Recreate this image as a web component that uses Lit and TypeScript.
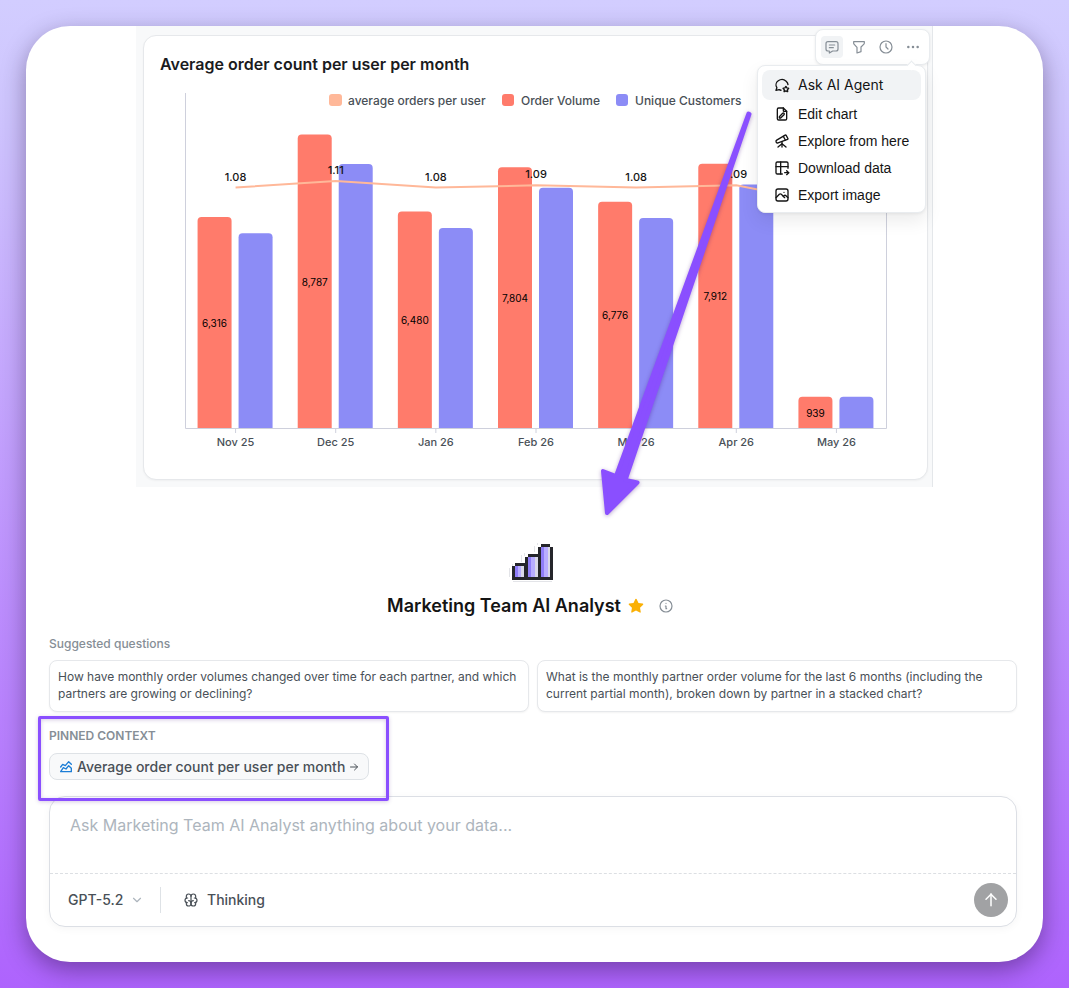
import { LitElement, html, svg, css } from "lit";
import { customElement, state } from "lit/decorators.js";

const ICONS: Record<string, string[]> = {
  message: ["M8 9h8", "M8 13h6", "M18 4a3 3 0 0 1 3 3v8a3 3 0 0 1 -3 3h-5l-5 3v-3h-2a3 3 0 0 1 -3 -3v-8a3 3 0 0 1 3 -3h12z"],
  filter: ["M4 4h16v2.172a2 2 0 0 1 -.586 1.414l-4.414 4.414v7l-6 2v-8.5l-4.48 -4.928a2 2 0 0 1 -.52 -1.345v-2.227z"],
  clock: ["M3 12a9 9 0 1 0 18 0a9 9 0 1 0 -18 0", "M12 7v5l3 3"],
  dots: ["M4 12a1 1 0 1 0 2 0a1 1 0 1 0 -2 0", "M11 12a1 1 0 1 0 2 0a1 1 0 1 0 -2 0", "M18 12a1 1 0 1 0 2 0a1 1 0 1 0 -2 0"],
  agent: [
    "M10.517 19.869a9.757 9.757 0 0 1 -2.817 -.869l-4.7 1l1.3 -3.9c-2.324 -3.437 -1.426 -7.872 2.1 -10.374c3.526 -2.501 8.59 -2.296 11.845 .48c1.666 1.421 2.594 3.29 2.747 5.21",
    "M17.8 20.817l-2.172 1.138a.392 .392 0 0 1 -.568 -.41l.415 -2.411l-1.757 -1.707a.389 .389 0 0 1 .217 -.665l2.428 -.352l1.086 -2.193a.392 .392 0 0 1 .702 0l1.086 2.193l2.428 .352a.39 .39 0 0 1 .217 .665l-1.757 1.707l.414 2.41a.39 .39 0 0 1 -.567 .411l-2.172 -1.138z",
  ],
  edit: ["M14 3v4a1 1 0 0 0 1 1h4", "M17 21h-10a2 2 0 0 1 -2 -2v-14a2 2 0 0 1 2 -2h7l5 5v11a2 2 0 0 1 -2 2z", "M10 18l5 -5a1.414 1.414 0 0 0 -2 -2l-5 5v2h2z"],
  telescope: [
    "M6 21l6 -5l6 5", "M12 13v8",
    "M3.294 13.678l.166 .281c.52 .88 1.624 1.265 2.605 .91l14.242 -5.165a1.023 1.023 0 0 0 .565 -1.456l-2.62 -4.705a1.087 1.087 0 0 0 -1.447 -.42l-.056 .032l-12.694 7.618c-1.02 .613 -1.357 1.897 -.76 2.905z",
    "M14 5l3 5.5",
  ],
  download: ["M12.5 21h-7.5a2 2 0 0 1 -2 -2v-14a2 2 0 0 1 2 -2h14a2 2 0 0 1 2 2v7.5", "M3 10h18", "M10 3v18", "M16 19h6", "M19 16l3 3l-3 3"],
  photo: ["M15 8h.01", "M3 6a3 3 0 0 1 3 -3h12a3 3 0 0 1 3 3v12a3 3 0 0 1 -3 3h-12a3 3 0 0 1 -3 -3v-12z", "M3 16l5 -5c.928 -.893 2.072 -.893 3 0l5 5", "M14 14l1 -1c.928 -.893 2.072 -.893 3 0l3 3"],
  area: ["M4 19l4 -6l4 2l4 -5l4 4l0 5l-16 0", "M4 12l3 -4l4 2l5 -6l4 4"],
  right: ["M5 12h14", "M13 6l6 6l-6 6"],
  up: ["M12 5v14", "M18 11l-6 -6", "M6 11l6 -6"],
  down: ["M6 9l6 6l6 -6"],
  info: ["M3 12a9 9 0 1 0 18 0a9 9 0 0 0 -18 0", "M12 8h.01", "M11 12h1v4h1"],
  brain: [
    "M15.5 13a3.5 3.5 0 0 0 -3.5 3.5v1a3.5 3.5 0 0 0 7 0v-1.8",
    "M8.5 13a3.5 3.5 0 0 1 3.5 3.5v1a3.5 3.5 0 0 1 -7 0v-1.8",
    "M17.5 16a3.5 3.5 0 0 0 0 -7h-.5", "M19 9.3v-2.8a3.5 3.5 0 0 0 -7 0",
    "M6.5 16a3.5 3.5 0 0 1 0 -7h.5", "M5 9.3v-2.8a3.5 3.5 0 0 1 7 0v10",
  ],
};

const icon = (name: string, size: number, stroke = 2) => html`
  <svg width=${size} height=${size} viewBox="0 0 24 24" fill="none" stroke="currentColor"
    stroke-width=${stroke} stroke-linecap="round" stroke-linejoin="round" aria-hidden="true">
    ${ICONS[name].map((d) => svg`<path d=${d}></path>`)}
  </svg>`;

interface Month { label: string; orders: number; customers: number; average: number; partial?: boolean; }

const MONTHS: Month[] = [
  { label: "Nov 25", orders: 6316, customers: 5832, average: 1.08 },
  { label: "Dec 25", orders: 8787, customers: 7905, average: 1.11 },
  { label: "Jan 26", orders: 6480, customers: 5990, average: 1.08 },
  { label: "Feb 26", orders: 7804, customers: 7190, average: 1.09 },
  { label: "Mar 26", orders: 6776, customers: 6290, average: 1.08 },
  { label: "Apr 26", orders: 7912, customers: 7290, average: 1.09 },
  { label: "May 26", orders: 939, customers: 935, average: 1.0, partial: true },
];

@customElement("order-chart")
export class OrderChart extends LitElement {
  static styles = css`
    :host { display: block; }
    svg { display: block; width: 100%; height: auto; font-family: Inter, "Liberation Sans", sans-serif; }
    .axis { stroke: #ced0dc; stroke-width: 1; fill: none; }
    .orders { fill: #ff7b6b; }
    .customers { fill: #8c8cf6; }
    .average { fill: #ffb899; }
    .line { fill: none; stroke: #ffb899; stroke-width: 2; stroke-linecap: butt; }
    text { text-anchor: middle; }
    .legend { font-size: 12px; font-weight: 500; fill: #495057; text-anchor: start; }
    .tick { font-size: 11px; font-weight: 500; fill: #495057; }
    .avg { font-size: 11px; font-weight: 500; fill: #141414; }
    .value { font-size: 10px; fill: #000; }
  `;

  private bar(x: number, value: number, cls: string) {
    const y = 342 - value * 0.0334;
    return svg`<path class=${cls} d="M${x} 342V${y + 4}q0 -4 4 -4h26q4 0 4 4V342z"></path>`;
  }

  render() {
    const step = 701 / 7;
    const centre = (i: number) => 25.5 + step * (i + 0.5);
    const y = (v: number) => 101.5 - (v - 1.08) * 217;
    const pts = MONTHS.map((m, i) => [centre(i), y(m.average)]);
    const path = pts.map(([px, py], i) => (i ? `L${px} ${py}` : `M${px} ${py}`)).join("");
    return html`
      <svg viewBox="0 0 751 366" role="img" aria-label="Average order count per user per month">
        <path class="axis" d="M25.5 7V342.5H726.5V7"></path>
        <rect class="average" x="169" y="8" width="13" height="12" rx="3"></rect>
        <text class="legend" x="188" y="19">average orders per user</text>
        <rect class="orders" x="342" y="8" width="12" height="12" rx="3"></rect>
        <text class="legend" x="361" y="19">Order Volume</text>
        <rect class="customers" x="456" y="8" width="12" height="12" rx="3"></rect>
        <text class="legend" x="475" y="19">Unique Customers</text>
        ${MONTHS.map((m, i) => {
          const c = centre(i);
          return svg`
            ${this.bar(c - 38, m.orders, "orders")}
            ${this.bar(c + 3, m.customers, "customers")}
            <path class="axis" d="M${c} 343V347"></path>
            <text class="tick" x=${c} y="360">${m.label}</text>`;
        })}
        <path class="line" d=${path}></path>
        ${MONTHS.map((m, i) => svg`
          <text class="value" x=${centre(i) - 21} y=${346.5 - m.orders * 0.0167}>${m.orders.toLocaleString("en-US")}</text>
          ${m.partial ? null : svg`<text class="avg" x=${centre(i)} y=${y(m.average) - 7}>${m.average.toFixed(2)}</text>`}`)}
      </svg>`;
  }
}

@customElement("chart-menu")
export class ChartMenu extends LitElement {
  static styles = css`
    :host { display: block; }
    .toolbar {
      display: flex; gap: 5px; width: max-content; box-sizing: border-box; margin-left: auto;
      padding: 6px 5px; border: 1px solid #e9ecef; border-radius: 8px; background: #fff;
      box-shadow: 0 1px 3px rgba(0, 0, 0, 0.08);
    }
    button { font: inherit; border: 0; background: none; padding: 0; margin: 0; cursor: pointer; }
    .tool {
      display: flex; align-items: center; justify-content: center;
      width: 22px; height: 22px; border-radius: 4px; color: #868e96;
    }
    .tool.on, .item.on { background: #f1f3f5; }
    .menu {
      position: relative; width: 169px; box-sizing: border-box; margin: 0 4px 0 auto; padding: 4px;
      border: 1px solid #e9ecef; border-radius: 8px; background: #fff;
      box-shadow: 0 1px 3px rgba(0, 0, 0, 0.06), 0 8px 18px rgba(0, 0, 0, 0.08);
      font-size: 14px; line-height: 20px; color: #141414;
    }
    .menu::before {
      content: ""; position: absolute; right: 10px; top: -4px; width: 7px; height: 7px; box-sizing: border-box;
      background: #fff; border: solid #e9ecef; border-width: 1px 0 0 1px; transform: rotate(45deg);
    }
    .item {
      display: flex; align-items: center; gap: 8px; width: 100%; height: 27px; padding: 0 12px;
      border-radius: 8px; color: inherit; white-space: nowrap;
      font-family: "Liberation Sans", Arial, sans-serif;
    }
    .item.on { height: 30px; font-family: Inter, sans-serif; }
    svg { display: block; flex: none; }
  `;

  render() {
    const tools = [["message", "Comments"], ["filter", "Filters"], ["clock", "History"], ["dots", "More"]];
    const items = [["agent", "Ask AI Agent"], ["edit", "Edit chart"], ["telescope", "Explore from here"], ["download", "Download data"], ["photo", "Export image"]];
    return html`
      <div class="toolbar">
        ${tools.map(([n, label], i) => html`<button class="tool ${i ? "" : "on"}" aria-label=${label}>${icon(n, 16, 1.8)}</button>`)}
      </div>
      <div class="menu" role="menu">
        ${items.map(([n, label], i) => html`<button role="menuitem" class="item ${i ? "" : "on"}">${icon(n, 16)}<span>${label}</span></button>`)}
      </div>`;
  }
}

@customElement("app-root")
export class AppRoot extends LitElement {
  static styles = css`
    :host {
      display: flex; box-sizing: border-box; min-height: 100vh; padding: 26px;
      background: linear-gradient(180deg, #d2cdff 0%, #cfc6fe 10%, #ae63fd 100%);
      font-family: Inter, "Liberation Sans", sans-serif; color: #141414;
    }
    svg { display: block; flex: none; }
    button, select, textarea { font: inherit; color: inherit; margin: 0; }
    .panel {
      position: relative; flex: 1; min-width: 0; border-radius: 44px; background: #fff;
      box-shadow: 0 8px 24px rgba(20, 0, 40, 0.38);
    }
    .strip {
      position: relative; max-width: 797px; box-sizing: border-box; margin: 0 auto; padding: 9px 4px 7px 7px;
      background: #f8f9fa; border-right: 1px solid #e4e7ea;
    }
    .card {
      border: 1px solid #e6e8eb; border-radius: 13px; padding: 18px 16px 17px; background: #fff;
      box-shadow: 0 1px 2px rgba(0, 0, 0, 0.04);
    }
    h2 { margin: 0 0 12px; font-size: 16px; line-height: 20px; font-weight: 600; color: #1a1b1e; }
    .card-foot { height: 10px; }
    chart-menu { position: absolute; right: 2px; top: 3px; z-index: 1; }
    .arrow { position: absolute; left: 570px; top: 80px; z-index: 2; pointer-events: none; filter: drop-shadow(0 1px 2px rgba(60, 0, 120, 0.35)); }
    .agent { display: flex; flex-direction: column; padding: 56px 26px 35px 23px; }
    .logo { align-self: center; }
    .name { display: flex; align-items: center; align-self: center; gap: 7px; margin: 9px 0 18px; padding-right: 5px; }
    h1 { margin: 0; font-size: 18px; line-height: 24px; font-weight: 600; }
    .name button { display: flex; padding: 0; border: 0; background: none; color: #868e96; margin-left: 7px; }
    .hint { margin: 0 0 8px; font-size: 12px; line-height: 16px; font-weight: 500; color: #868e96; }
    .questions { display: grid; grid-template-columns: 1fr 1fr; gap: 8px; margin-bottom: 16px; }
    .question {
      padding: 7px 8px 9px; border: 1px solid #e6e8eb; border-radius: 8px; background: #fff; text-align: left;
      font-size: 12px; line-height: 17px; font-weight: 400; color: #495057; box-shadow: 0 1px 2px rgba(0, 0, 0, 0.05);
    }
    .pinned { position: relative; align-self: flex-start; margin-bottom: 16px; }
    .pinned::after {
      content: ""; position: absolute; inset: -12px -20px -21px -11px; border: 3px solid #8a4fff;
      border-radius: 2px; box-shadow: 0 1px 4px rgba(60, 0, 120, 0.2), inset 0 1px 4px rgba(60, 0, 120, 0.2);
      pointer-events: none; z-index: 1;
    }
    .pinned .hint { font-weight: 600; margin-bottom: 9px; }
    .chip {
      display: flex; align-items: center; gap: 3px; height: 27px; box-sizing: border-box; padding: 0 8px;
      border: 1px solid #dee2e6; border-radius: 8px; background: #f8f9fa; color: #495057; text-decoration: none;
      font-size: 14px; line-height: 20px; font-weight: 500;
    }
    .chip svg:first-child { color: #1c7ed6; }
    .composer {
      border: 1px solid #dcdfe5; border-radius: 16px; background: #fff; box-shadow: 0 2px 8px rgba(0, 0, 0, 0.04);
    }
    textarea {
      display: block; width: 100%; height: 76px; box-sizing: border-box; padding: 16px 20px; border: 0; outline: 0;
      resize: none; background: none; font-size: 16px; line-height: 24px;
    }
    textarea::placeholder { color: #adb5bd; opacity: 1; }
    .bar {
      display: flex; align-items: center; height: 52px; border-top: 1px dashed #dcdfe3; padding: 0 8px 0 18px;
      font-size: 14px; line-height: 20px; font-weight: 500; color: #495057;
    }
    .model { position: relative; display: flex; align-items: center; }
    select { appearance: none; border: 0; background: none; padding: 0 36px 0 0; outline: 0; }
    .model svg { position: absolute; right: 16px; color: #adb5bd; pointer-events: none; }
    .rule { width: 1px; height: 26px; background: #dee2e6; }
    .think { display: flex; align-items: center; gap: 8px; margin-left: 22px; padding: 0; border: 0; background: none; }
    .send {
      display: flex; align-items: center; justify-content: center; width: 34px; height: 34px; margin-left: auto;
      padding: 0; border: 0; border-radius: 50%; background: #a1a2a4; color: #fff;
    }
  `;

  @state() private prompt = "";

  private logo() {
    return html`
      <svg class="logo" width="48" height="42" viewBox="-3 -1 48 42" shape-rendering="crispEdges" aria-hidden="true">
        <path fill="#e3e4e8" d="M-3 24h1v9h-1zM0 20h1v4h-1zM9 11h1v7h-1zM12 9h1v3h-1zM22 2h1v6h-1zM25 -1h1v2h-1zM1 37h39v1h-39z"></path>
        <path fill="#25262b" d="M0 22h3v-3h10v-6h3v-3h10v-7h3v-3h9v3h3v33h-41z"></path>
        <path fill="#8f7df8" d="M3 22h7v11h-7zM16 13h7v20h-7zM29 3h7v30h-7z"></path>
        <path fill="#b8adff" d="M6 22h3v11h-3zM19 13h4v20h-4zM32 3h4v30h-4z"></path>
        <path fill="#d9d8e8" d="M9 22h3v11h-3zM23 13h3v20h-3zM36 3h2v30h-2z"></path>
      </svg>`;
  }

  render() {
    return html`
      <main class="panel">
        <section class="strip">
          <div class="card">
            <h2>Average order count per user per month</h2>
            <order-chart></order-chart>
            <div class="card-foot"></div>
          </div>
          <chart-menu></chart-menu>
        </section>
        <svg class="arrow" width="165" height="420" viewBox="570 80 165 420" aria-hidden="true">
          <path fill="#8a4fff" stroke="#8a4fff" stroke-width="4" stroke-linejoin="round"
            d="M722.5 87.5L590 450L577 445L581 487L611.5 456.5L599.5 454L723.5 88z"></path>
        </svg>
        <section class="agent">
          ${this.logo()}
          <div class="name">
            <h1>Marketing Team AI Analyst</h1>
            <svg width="16" height="16" viewBox="0 0 24 24" fill="#fab005" aria-hidden="true">
              <path d="M8.243 7.34l-6.38 .925l-.113 .023a1 1 0 0 0 -.44 1.684l4.622 4.499l-1.09 6.355l-.013 .11a1 1 0 0 0 1.464 .944l5.706 -3l5.693 3l.1 .046a1 1 0 0 0 1.352 -1.1l-1.091 -6.355l4.624 -4.5l.078 -.085a1 1 0 0 0 -.633 -1.62l-6.38 -.926l-2.852 -5.78a1 1 0 0 0 -1.794 0l-2.853 5.78z"></path>
            </svg>
            <button aria-label="About this agent">${icon("info", 16, 1.8)}</button>
          </div>
          <p class="hint">Suggested questions</p>
          <div class="questions">
            <button class="question">How have monthly order volumes changed over time for each partner, and which partners are growing or declining?</button>
            <button class="question">What is the monthly partner order volume for the last 6 months (including the current partial month), broken down by partner in a stacked chart?</button>
          </div>
          <div class="pinned">
            <p class="hint">PINNED CONTEXT</p>
            <a class="chip" href="#chart">${icon("area", 16, 2)}<span>Average order count per user per month</span>${icon("right", 12, 2)}</a>
          </div>
          <form class="composer" @submit=${(e: Event) => e.preventDefault()}>
            <textarea aria-label="Message" placeholder="Ask Marketing Team AI Analyst anything about your data..."
              .value=${this.prompt}
              @input=${(e: Event) => (this.prompt = (e.target as HTMLTextAreaElement).value)}></textarea>
            <div class="bar">
              <div class="model">
                <select aria-label="Model"><option>GPT-5.2</option></select>
                ${icon("down", 14, 2)}
              </div>
              <span class="rule"></span>
              <button type="button" class="think">${icon("brain", 16, 1.8)}<span>Thinking</span></button>
              <button class="send" aria-label="Send">${icon("up", 20, 1.8)}</button>
            </div>
          </form>
        </section>
      </main>`;
  }
}
